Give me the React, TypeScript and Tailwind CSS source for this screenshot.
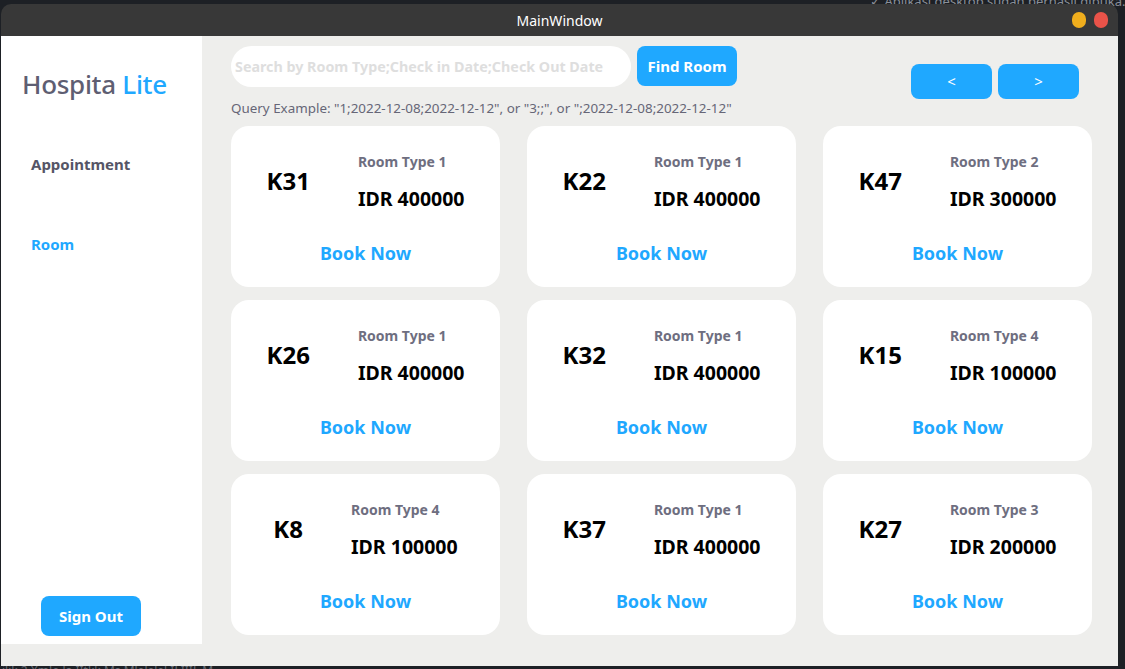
import React from "react";

const rooms = [
  { code: "K31", type: "Room Type 1", price: "IDR 400000" },
  { code: "K22", type: "Room Type 1", price: "IDR 400000" },
  { code: "K47", type: "Room Type 2", price: "IDR 300000" },
  { code: "K26", type: "Room Type 1", price: "IDR 400000" },
  { code: "K32", type: "Room Type 1", price: "IDR 400000" },
  { code: "K15", type: "Room Type 4", price: "IDR 100000" },
  { code: "K8", type: "Room Type 4", price: "IDR 100000" },
  { code: "K37", type: "Room Type 1", price: "IDR 400000" },
  { code: "K27", type: "Room Type 3", price: "IDR 200000" },
];

const font = { fontFamily: '"Noto Sans", "Open Sans", sans-serif' } as React.CSSProperties;

function Card({ code, type, price }: { code: string; type: string; price: string }) {
  return (
    <div className="h-[161px] rounded-[18px] bg-white flex flex-col items-center pt-[27px]">
      <div className="flex items-center justify-center gap-12">
        <div className="text-[24px] font-bold text-black leading-[30px]">{code}</div>
        <div className="flex flex-col">
          <div className="text-[14px] font-bold text-[#6e6e80] leading-[18px]">{type}</div>
          <div className="mt-[18px] text-[19.5px] font-bold text-black leading-[20px]">{price}</div>
        </div>
      </div>
      <div className="mt-[32px] text-[18px] font-bold text-[#1fa8ff] leading-[24px]">Book Now</div>
    </div>
  );
}

export default function App() {
  return (
    <div className="w-[1125px] h-[669px] bg-[#1d2025] overflow-hidden relative" style={font}>
      <div className="absolute left-[870px] top-[-8px] text-[13px] text-[#8a8f98] whitespace-nowrap">
        ✓ Aplikasi desktop sudah berhasil dibuka. Pastikan internet menyala agar
      </div>
      <div className="absolute left-[2px] top-[662px] text-[12px] text-[#6a6f78] whitespace-nowrap">
        ilik 2 Xmlo la IItkk Ms Mlelelel ILIIIL M
      </div>
      <div className="relative ml-[1px] mt-[4px] w-[1117px] h-[662px] flex flex-col rounded-t-[10px] overflow-hidden">
        <div className="h-[32px] bg-[#383838] flex items-center justify-center relative shrink-0">
          <span className="text-[14px] text-white">MainWindow</span>
          <div className="absolute right-[10px] top-[8px] flex gap-[8px]">
            <div className="w-[14px] h-[16px] rounded-full bg-[#f0ae1d]" />
            <div className="w-[14px] h-[16px] rounded-full bg-[#ea5349]" />
          </div>
        </div>
        <div className="flex-1 flex items-start bg-[#eeeeec]">
          <div className="w-[201px] h-[608px] bg-white flex flex-col shrink-0">
            <div className="pt-[30px] pl-[21px] text-[26px] font-medium leading-[36px] text-[#5e5e72] tracking-[-0.3px]">
              Hospita <span className="text-[#1fa8ff]">Lite</span>
            </div>
            <div className="mt-[52px] pl-[30px] text-[15px] font-bold text-[#555566] leading-[20px]">Appointment</div>
            <div className="mt-[60px] pl-[30px] text-[15px] font-bold text-[#1fa8ff] leading-[20px]">Room</div>
            <div className="mt-auto mb-[8px] ml-[40px]">
              <button className="w-[100px] h-[40px] rounded-[8px] bg-[#1fa8ff] text-white text-[15px] font-bold">
                Sign Out
              </button>
            </div>
          </div>
          <div className="flex-1 pl-[29px] pt-[10px]">
            <div className="flex items-start">
              <div className="flex flex-col">
                <div className="flex items-start gap-[6px]">
                  <div className="w-[400px] h-[41px] rounded-full bg-white flex items-center pl-[4px]">
                    <span className="text-[14.3px] font-bold text-[#dedede] whitespace-nowrap">
                      Search by Room Type;Check in Date;Check Out Date
                    </span>
                  </div>
                  <button className="w-[100px] h-[40px] rounded-[8px] bg-[#1fa8ff] text-white text-[15px] font-bold">
                    Find Room
                  </button>
                </div>
                <div className="mt-[13px] text-[13.4px] leading-[16px] text-[#666677] whitespace-nowrap">
                  Query Example: "1;2022-12-08;2022-12-12", or "3;;", or ";2022-12-08;2022-12-12"
                </div>
              </div>
              <div className="ml-auto mr-[39px] mt-[18px] flex gap-[6px]">
                <button className="w-[81px] h-[35px] rounded-[8px] bg-[#1fa8ff] text-white text-[15px]">&lt;</button>
                <button className="w-[81px] h-[35px] rounded-[8px] bg-[#1fa8ff] text-white text-[15px]">&gt;</button>
              </div>
            </div>
            <div className="mt-[10px] grid grid-cols-[269px_269px_269px] gap-x-[27px] gap-y-[13px]">
              {rooms.map((r) => (
                <Card key={r.code} {...r} />
              ))}
            </div>
          </div>
        </div>
      </div>
    </div>
  );
}
